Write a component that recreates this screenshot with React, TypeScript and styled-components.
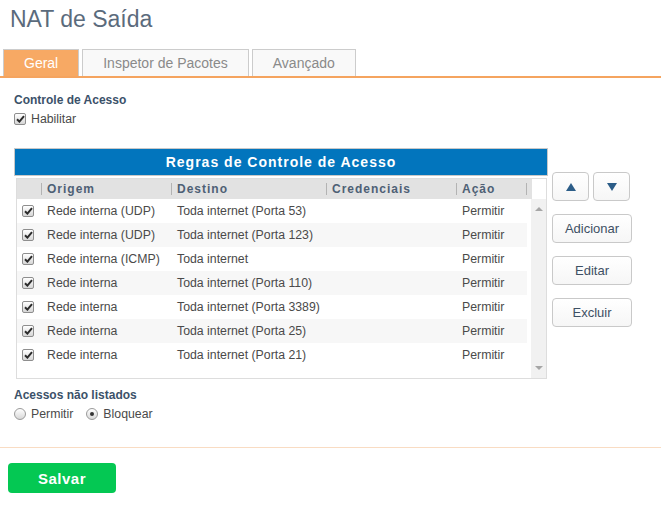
import React from 'react';
import styled, { createGlobalStyle } from 'styled-components';

const GlobalStyle = createGlobalStyle`
  html, body { margin: 0; padding: 0; background: #ffffff; }
  body { font-family: "Liberation Sans", Arial, Helvetica, sans-serif; color: #444; }
  * { box-sizing: border-box; }
`;

const Page = styled.div`
  width: 661px;
  min-height: 507px;
  overflow: hidden;
`;

const Title = styled.h1`
  margin: 5px 0 0 10px;
  font-size: 23px;
  line-height: 28px;
  font-weight: normal;
  color: #5b6b7c;
`;

const TabBar = styled.div`
  display: flex;
  gap: 3px;
  margin-top: 16px;
  padding-left: 3px;
  border-bottom: 2px solid #f5a45f;
`;

const Tab = styled.div<{ $active?: boolean }>`
  height: 27px;
  padding: 0 20px;
  display: flex;
  align-items: center;
  border: 1px solid #cccccc;
  border-bottom: none;
  background: ${p => (p.$active ? '#f7a964' : '#f9f9f9')};
  color: ${p => (p.$active ? '#ffffff' : '#8a8a8a')};
  font-size: 14px;
`;

const Content = styled.div`
  padding: 14px 0 0 14px;
`;

const SectionLabel = styled.div<{ $gap?: number }>`
  margin-top: ${p => p.$gap ?? 0}px;
  font-size: 12px;
  line-height: 16px;
  font-weight: bold;
  color: #3b5169;
`;

const OptionRow = styled.div`
  display: flex;
  align-items: center;
  height: 16px;
  margin-top: 3px;
  font-size: 12.3px;
  color: #4a4a4a;
`;

const Option = styled.label`
  display: flex;
  align-items: center;
  gap: 5px;
  margin-right: 13px;
`;

const CheckBox = styled.span`
  width: 12px;
  height: 12px;
  flex: none;
  border: 1px solid #8e8e8e;
  border-radius: 2px;
  background: linear-gradient(#ffffff, #d6d6d6);
  display: flex;
  align-items: center;
  justify-content: center;
`;

const RadioDot = styled.span<{ $on?: boolean }>`
  width: 12px;
  height: 12px;
  flex: none;
  border: 1px solid #9a9a9a;
  border-radius: 50%;
  background: linear-gradient(#ffffff, #d8d8d8);
  display: flex;
  align-items: center;
  justify-content: center;
  &::after {
    content: '';
    width: 4px;
    height: 4px;
    border-radius: 50%;
    background: ${p => (p.$on ? '#333333' : 'transparent')};
  }
`;

const Check = () => (
  <CheckBox>
    <svg width="9" height="8" viewBox="0 0 9 8">
      <path d="M1 4.2 L3.4 6.6 L8 1.2" fill="none" stroke="#2b2b2b" strokeWidth="2" />
    </svg>
  </CheckBox>
);

const RulesArea = styled.div`
  display: flex;
  align-items: flex-start;
  margin-top: 21px;
`;

const Panel = styled.div`
  width: 534px;
`;

const PanelHeader = styled.div`
  height: 28px;
  border: 1px solid #c8c8c8;
  background: #0275bd;
  color: #ffffff;
  font-size: 14px;
  font-weight: bold;
  letter-spacing: 1px;
  display: flex;
  align-items: center;
  justify-content: center;
`;

const Grid = styled.div`
  margin: 2px 0 0 2px;
  width: 531px;
  border: 1px solid #dddddd;
`;

const COLS = '24px 130px 155px 130px 70px';

const GridHead = styled.div`
  display: grid;
  grid-template-columns: ${COLS} 6px;
  width: 515px;
  height: 20px;
  background: #e2e2e2;
`;

const HeadCell = styled.div<{ $sep?: boolean }>`
  position: relative;
  padding-left: 6px;
  display: flex;
  align-items: center;
  font-size: 12px;
  font-weight: bold;
  letter-spacing: 1px;
  color: #4e6075;
  white-space: nowrap;
  &::before {
    content: '';
    display: ${p => (p.$sep ? 'block' : 'none')};
    position: absolute;
    left: 0;
    top: 4px;
    width: 1px;
    height: 12px;
    background: #b3b3b3;
  }
`;

const GridBody = styled.div`
  display: flex;
  height: 179px;
`;

const Rows = styled.div`
  width: 510px;
`;

const Row = styled.div<{ $alt?: boolean }>`
  display: grid;
  grid-template-columns: ${COLS};
  height: 24px;
  background: ${p => (p.$alt ? '#f7f7f7' : '#ffffff')};
`;

const Cell = styled.div<{ $check?: boolean }>`
  padding-left: ${p => (p.$check ? 5 : 6)}px;
  display: flex;
  align-items: center;
  font-size: 12.3px;
  color: #4a4a4a;
  white-space: nowrap;
`;

const Scrollbar = styled.div`
  margin-left: auto;
  width: 15px;
  background: #f1f1f1;
  display: flex;
  flex-direction: column;
  align-items: center;
  justify-content: space-between;
  padding: 8px 0 8px;
`;

const SideButtons = styled.div`
  display: flex;
  flex-direction: column;
  gap: 13px;
  margin: 24px 0 0 4px;
`;

const ArrowPair = styled.div`
  display: flex;
  gap: 4px;
`;

const Button = styled.button<{ $w: number }>`
  width: ${p => p.$w}px;
  height: 29px;
  padding: 0;
  border: 1px solid #c9c9c9;
  border-radius: 4px;
  background: linear-gradient(#ffffff, #f6f6f6);
  font-family: inherit;
  font-size: 13px;
  color: #3e5064;
  display: flex;
  align-items: center;
  justify-content: center;
`;

const Divider = styled.div`
  margin-top: 25px;
  height: 1px;
  background: #f9dcc3;
`;

const Footer = styled.div`
  padding: 15px 0 0 8px;
`;

const SaveButton = styled.button`
  width: 108px;
  height: 30px;
  border: none;
  border-radius: 4px;
  background: #04c853;
  color: #ffffff;
  font-family: inherit;
  font-size: 15px;
  font-weight: bold;
  letter-spacing: 0.5px;
`;

const rules = [
  ['Rede interna (UDP)', 'Toda internet (Porta 53)'],
  ['Rede interna (UDP)', 'Toda internet (Porta 123)'],
  ['Rede interna (ICMP)', 'Toda internet'],
  ['Rede interna', 'Toda internet (Porta 110)'],
  ['Rede interna', 'Toda internet (Porta 3389)'],
  ['Rede interna', 'Toda internet (Porta 25)'],
  ['Rede interna', 'Toda internet (Porta 21)'],
];

const Tri = ({ up, color, w, h }: { up: boolean; color: string; w: number; h: number }) => (
  <svg width={w} height={h} viewBox={`0 0 ${w} ${h}`}>
    <polygon points={up ? `0,${h} ${w / 2},0 ${w},${h}` : `0,0 ${w},0 ${w / 2},${h}`} fill={color} />
  </svg>
);

export default function App() {
  return (
    <Page>
      <GlobalStyle />
      <Title>NAT de Saída</Title>
      <TabBar>
        <Tab $active>Geral</Tab>
        <Tab>Inspetor de Pacotes</Tab>
        <Tab>Avançado</Tab>
      </TabBar>
      <Content>
        <SectionLabel>Controle de Acesso</SectionLabel>
        <OptionRow>
          <Option>
            <Check />
            Habilitar
          </Option>
        </OptionRow>
        <RulesArea>
          <Panel>
            <PanelHeader>Regras de Controle de Acesso</PanelHeader>
            <Grid>
              <GridHead>
                <HeadCell />
                <HeadCell $sep>Origem</HeadCell>
                <HeadCell $sep>Destino</HeadCell>
                <HeadCell $sep>Credenciais</HeadCell>
                <HeadCell $sep>Ação</HeadCell>
                <HeadCell $sep />
              </GridHead>
              <GridBody>
                <Rows>
                  {rules.map((r, i) => (
                    <Row key={i} $alt={i % 2 === 1}>
                      <Cell $check>
                        <Check />
                      </Cell>
                      <Cell>{r[0]}</Cell>
                      <Cell>{r[1]}</Cell>
                      <Cell />
                      <Cell>Permitir</Cell>
                    </Row>
                  ))}
                </Rows>
                <Scrollbar>
                  <Tri up color="#a6a6a6" w={8} h={4} />
                  <Tri up={false} color="#a6a6a6" w={8} h={4} />
                </Scrollbar>
              </GridBody>
            </Grid>
          </Panel>
          <SideButtons>
            <ArrowPair>
              <Button $w={37}>
                <Tri up color="#2c5d88" w={10} h={8} />
              </Button>
              <Button $w={37}>
                <Tri up={false} color="#2c5d88" w={10} h={8} />
              </Button>
            </ArrowPair>
            <Button $w={80}>Adicionar</Button>
            <Button $w={80}>Editar</Button>
            <Button $w={80}>Excluir</Button>
          </SideButtons>
        </RulesArea>
        <SectionLabel $gap={8}>Acessos não listados</SectionLabel>
        <OptionRow>
          <Option>
            <RadioDot />
            Permitir
          </Option>
          <Option>
            <RadioDot $on />
            Bloquear
          </Option>
        </OptionRow>
      </Content>
      <Divider />
      <Footer>
        <SaveButton>Salvar</SaveButton>
      </Footer>
    </Page>
  );
}
